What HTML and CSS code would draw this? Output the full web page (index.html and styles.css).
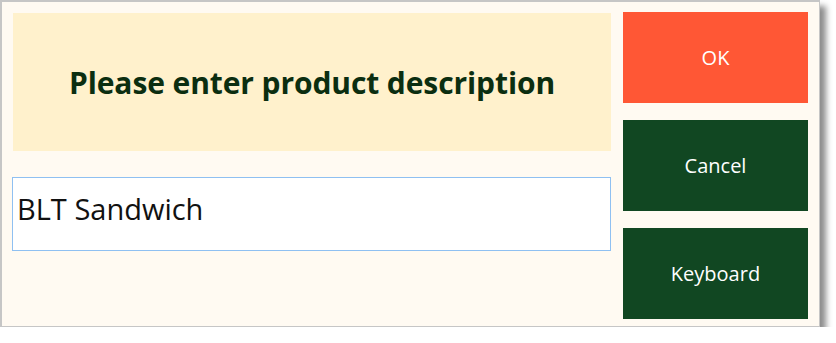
FILE: index.html
```html
<!DOCTYPE html>
<html lang="en">
<head>
  <meta charset="UTF-8" />
  <title>Product Description</title>
  <link rel="stylesheet" href="styles.css">
</head>
<body>
  <div class="dialog">
    <div class="main">
      <div class="prompt">
        <h2>Please enter product description</h2>
      </div>
      <input type="text" class="entry" value="BLT Sandwich">
    </div>
    <div class="actions">
      <button class="btn ok">OK</button>
      <button class="btn">Cancel</button>
      <button class="btn">Keyboard</button>
    </div>
  </div>
</body>
</html>
```

FILE: styles.css
```css
* { box-sizing: border-box; }

body {
  margin: 0;
  background: #fff;
  font-family: 'Open Sans', 'Noto Sans', sans-serif;
}

.dialog {
  width: 820px;
  height: 327px;
  background: #fffaf2;
  border: 2px solid #c6c6c6;
  border-right-width: 1px;
  border-bottom-width: 1px;
  box-shadow: 6px 6px 6px rgba(0, 0, 0, 0.45);
  padding: 10px 10px 6px 11px;
  display: flex;
  gap: 12px;
}

.main {
  width: 598px;
  display: flex;
  flex-direction: column;
}

.prompt {
  margin-top: 1px;
  height: 138px;
  background: #fff1cc;
  display: flex;
  align-items: center;
  justify-content: center;
}

.prompt h2 {
  margin: 0;
  color: #0b2e10;
  font-size: 30px;
  font-weight: bold;
  letter-spacing: -0.1px;
}

.entry {
  margin-top: 26px;
  margin-left: -1px;
  height: 74px;
  border: 1px solid #8fc0f2;
  background: #fff;
  padding: 0 4px 12px;
  font-family: 'Open Sans', 'Noto Sans', sans-serif;
  font-size: 29px;
  color: #111;
  outline: none;
}

.actions {
  width: 185px;
  display: flex;
  flex-direction: column;
  gap: 17px;
}

.btn {
  height: 91px;
  border: none;
  background: #114722;
  color: #fff;
  font-family: 'Open Sans', 'Noto Sans', sans-serif;
  font-size: 20px;
  cursor: pointer;
}

.btn.ok {
  background: #ff5735;
}
```
